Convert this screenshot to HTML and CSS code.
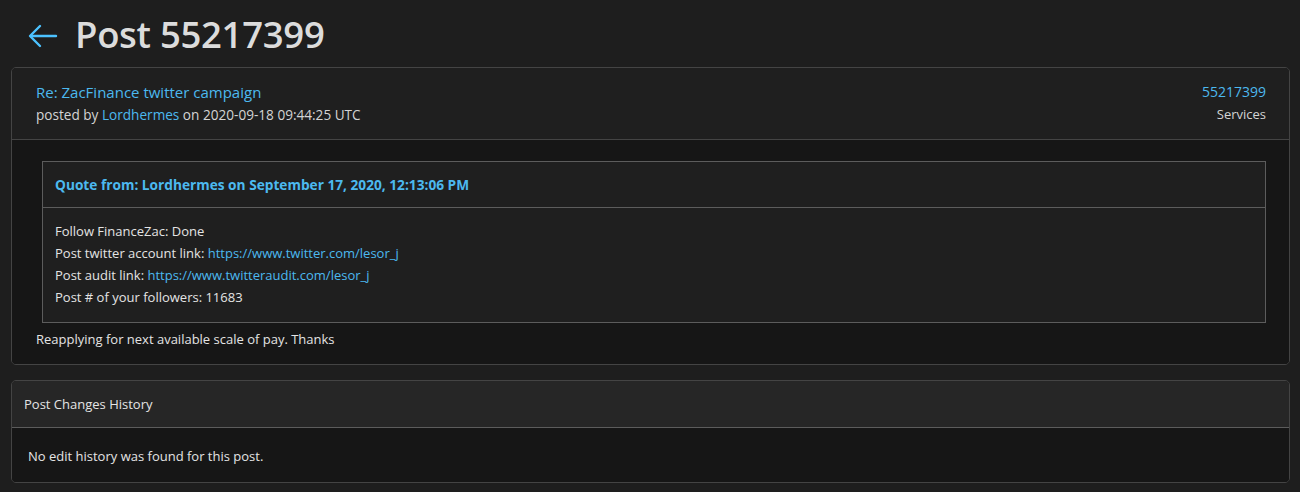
FILE: index.html
```html
<!DOCTYPE html>
<html lang="en">
<head>
    <meta charset="UTF-8">
    <meta name="viewport" content="width=device-width, initial-scale=1.0">
    <title>Post 55217399</title>
    <link rel="stylesheet" href="styles.css">
</head>
<body>
    <div class="page-header">
        <a class="back" href="#">
            <svg width="30" height="24" viewBox="0 0 30 24" fill="none" stroke="#4cc2ff" stroke-width="2.4" stroke-linecap="round" stroke-linejoin="round">
                <path d="M28 12H3"/>
                <path d="M12 2L2 12l10 10"/>
            </svg>
        </a>
        <h1>Post 55217399</h1>
    </div>

    <div class="card">
        <div class="card-header post-head">
            <div>
                <a class="post-title" href="#">Re: ZacFinance twitter campaign</a>
                <div class="meta">posted by <a href="#">Lordhermes</a> on 2020-09-18 09:44:25 UTC</div>
            </div>
            <div class="post-side">
                <a class="post-id" href="#">55217399</a>
                <div class="side-meta">Services</div>
            </div>
        </div>
        <div class="card-body post-body">
            <div class="quote">
                <div class="quote-head">Quote from: Lordhermes on September 17, 2020, 12:13:06 PM</div>
                <div class="quote-body">
                    Follow FinanceZac: Done<br>
                    Post twitter account link: <a href="#">https://www.twitter.com/lesor_j</a><br>
                    Post audit link: <a href="#">https://www.twitteraudit.com/lesor_j</a><br>
                    Post # of your followers: 11683
                </div>
            </div>
            <div class="reply">Reapplying for next available scale of pay. Thanks</div>
        </div>
    </div>

    <div class="card">
        <div class="card-header history-head">Post Changes History</div>
        <div class="card-body history-body">No edit history was found for this post.</div>
    </div>
</body>
</html>
```

FILE: styles.css
```css
body {
    margin: 0;
    padding: 0 10px 0 11px;
    background-color: #1e1e1e;
    color: #e4e4e4;
    font-family: "Open Sans", "Noto Sans", Arial, sans-serif;
    font-size: 13px;
}
a {
    color: #4cb9ef;
    text-decoration: none;
}
.page-header {
    display: flex;
    align-items: center;
    height: 67px;
    padding-left: 17px;
}
.back {
    display: flex;
    margin-right: 17px;
    margin-top: 4px;
}
h1 {
    margin: 0;
    font-size: 36.5px;
    font-weight: 600;
    color: #dcdcdc;
    letter-spacing: -0.3px;
}
.card {
    border: 1px solid #444;
    border-radius: 5px;
    overflow: hidden;
    margin-bottom: 15px;
}
.card-header {
    background-color: #1f1f1f;
    border-bottom: 1px solid #444;
}
.card-body {
    background-color: #161616;
}
.post-head {
    display: flex;
    justify-content: space-between;
    padding: 13px 23px 13px 24px;
    line-height: 22px;
}
.post-title {
    font-size: 15px;
}
.meta {
    color: #d4d4d4;
    font-size: 13.6px;
}
.side-meta {
    color: #d4d4d4;
}
.post-side {
    text-align: right;
}
.post-id {
    font-size: 14px;
}
.post-body {
    padding: 21px 23px 15px 24px;
}
.quote {
    margin: 0 0 6px 6px;
    border: 1px solid #5c5c5c;
    background-color: #1f1f1f;
}
.quote-head {
    padding: 12px 12px 11px;
    border-bottom: 1px solid #5c5c5c;
    color: #4cb9ef;
    font-weight: 700;
    font-size: 13.7px;
    line-height: 22px;
}
.quote-body {
    padding: 12px 12px 14px;
    line-height: 22px;
}
.reply {
    line-height: 20px;
}
.history-head {
    background-color: #262626;
    border-bottom-color: #5c5c5c;
    padding: 12px;
    line-height: 22px;
}
.history-body {
    padding: 17px 16px 15px;
    line-height: 22px;
}
```
